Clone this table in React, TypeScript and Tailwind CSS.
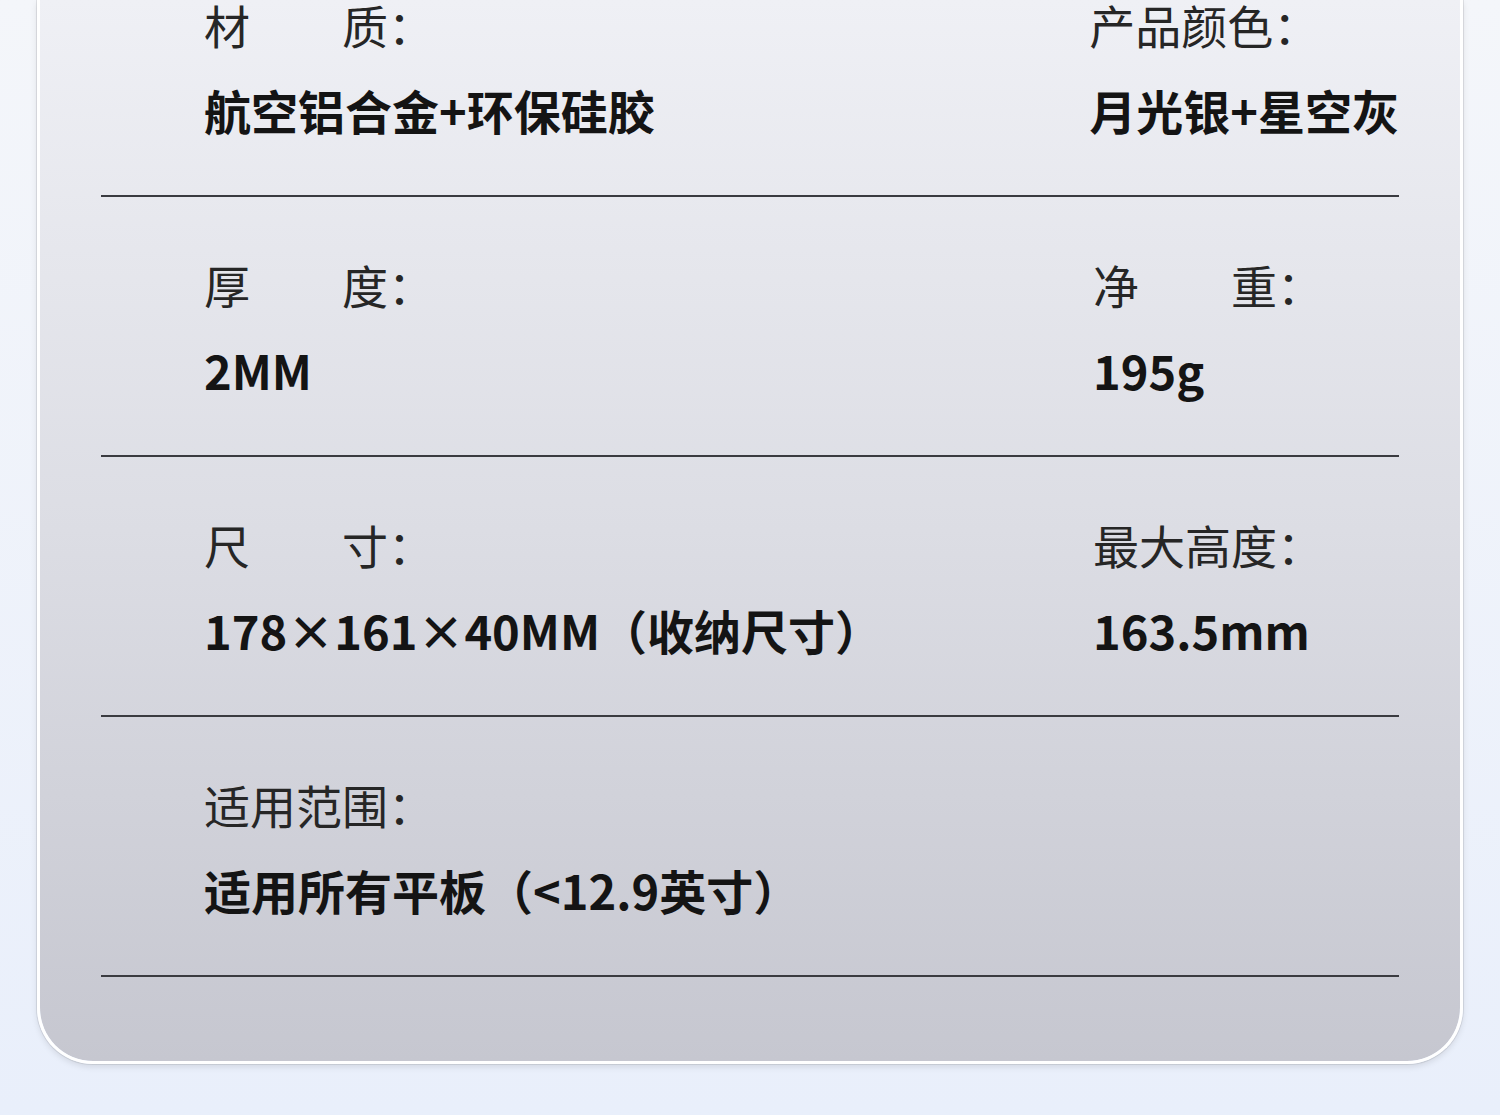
import React from "react";

const font = { fontFamily: '"Noto Sans CJK SC", "Noto Sans", sans-serif' };

type Cell = { label: string; value: string };

function Label({ text }: { text: string }) {
  return (
    <div className="h-[46px] text-[46px] leading-[46px] font-normal text-[#262626] whitespace-pre">
      {text}
    </div>
  );
}

function Value({ text }: { text: string }) {
  return (
    <div className="h-[46px] text-[47px] leading-[46px] font-bold text-[#141414] whitespace-pre">
      {text}
    </div>
  );
}

function Row({ left, right, first }: { left: Cell; right?: Cell; first?: boolean }) {
  return (
    <div className={first ? "pt-[1px]" : "pt-[64px]"}>
      <div className="flex pl-[103px]">
        <div className="w-[889px] flex flex-col gap-[40px]">
          <Label text={left.label} />
          <Value text={left.value} />
        </div>
        {right && (
          <div className="flex flex-col gap-[40px]">
            <Label text={right.label} />
            <Value text={right.value} />
          </div>
        )}
      </div>
      <div className="mt-[62px] h-[2px] bg-[#3a3b40]" />
    </div>
  );
}

export default function App() {
  return (
    <div
      className="w-[1500px] h-[1115px] overflow-hidden bg-gradient-to-b from-[#f4f6fa] to-[#e9effb]"
      style={font}
    >
      <div className="ml-[37px] w-[1426px] h-[1064px] rounded-b-[56px] border-x-[3px] border-b-[3px] border-white shadow-[0_0_0_1px_rgba(120,120,130,0.18),0_3px_6px_rgba(0,0,0,0.1)] overflow-hidden">
        <div className="h-full rounded-b-[53px] bg-gradient-to-b from-[#eff0f5] via-[#dcdde4] to-[#c6c7d0] px-[61px]">
          <Row
            first
            left={{ label: "材\u3000\u3000质：", value: "航空铝合金+环保硅胶" }}
            right={{ label: "产品颜色：", value: "月光银+星空灰" }}
          />
          <Row
            left={{ label: "厚\u3000\u3000度：", value: "2MM" }}
            right={{ label: "净\u3000\u3000重：", value: "195g" }}
          />
          <Row
            left={{ label: "尺\u3000\u3000寸：", value: "178×161×40MM（收纳尺寸）" }}
            right={{ label: "最大高度：", value: "163.5mm" }}
          />
          <Row left={{ label: "适用范围：", value: "适用所有平板（<12.9英寸）" }} />
        </div>
      </div>
    </div>
  );
}
